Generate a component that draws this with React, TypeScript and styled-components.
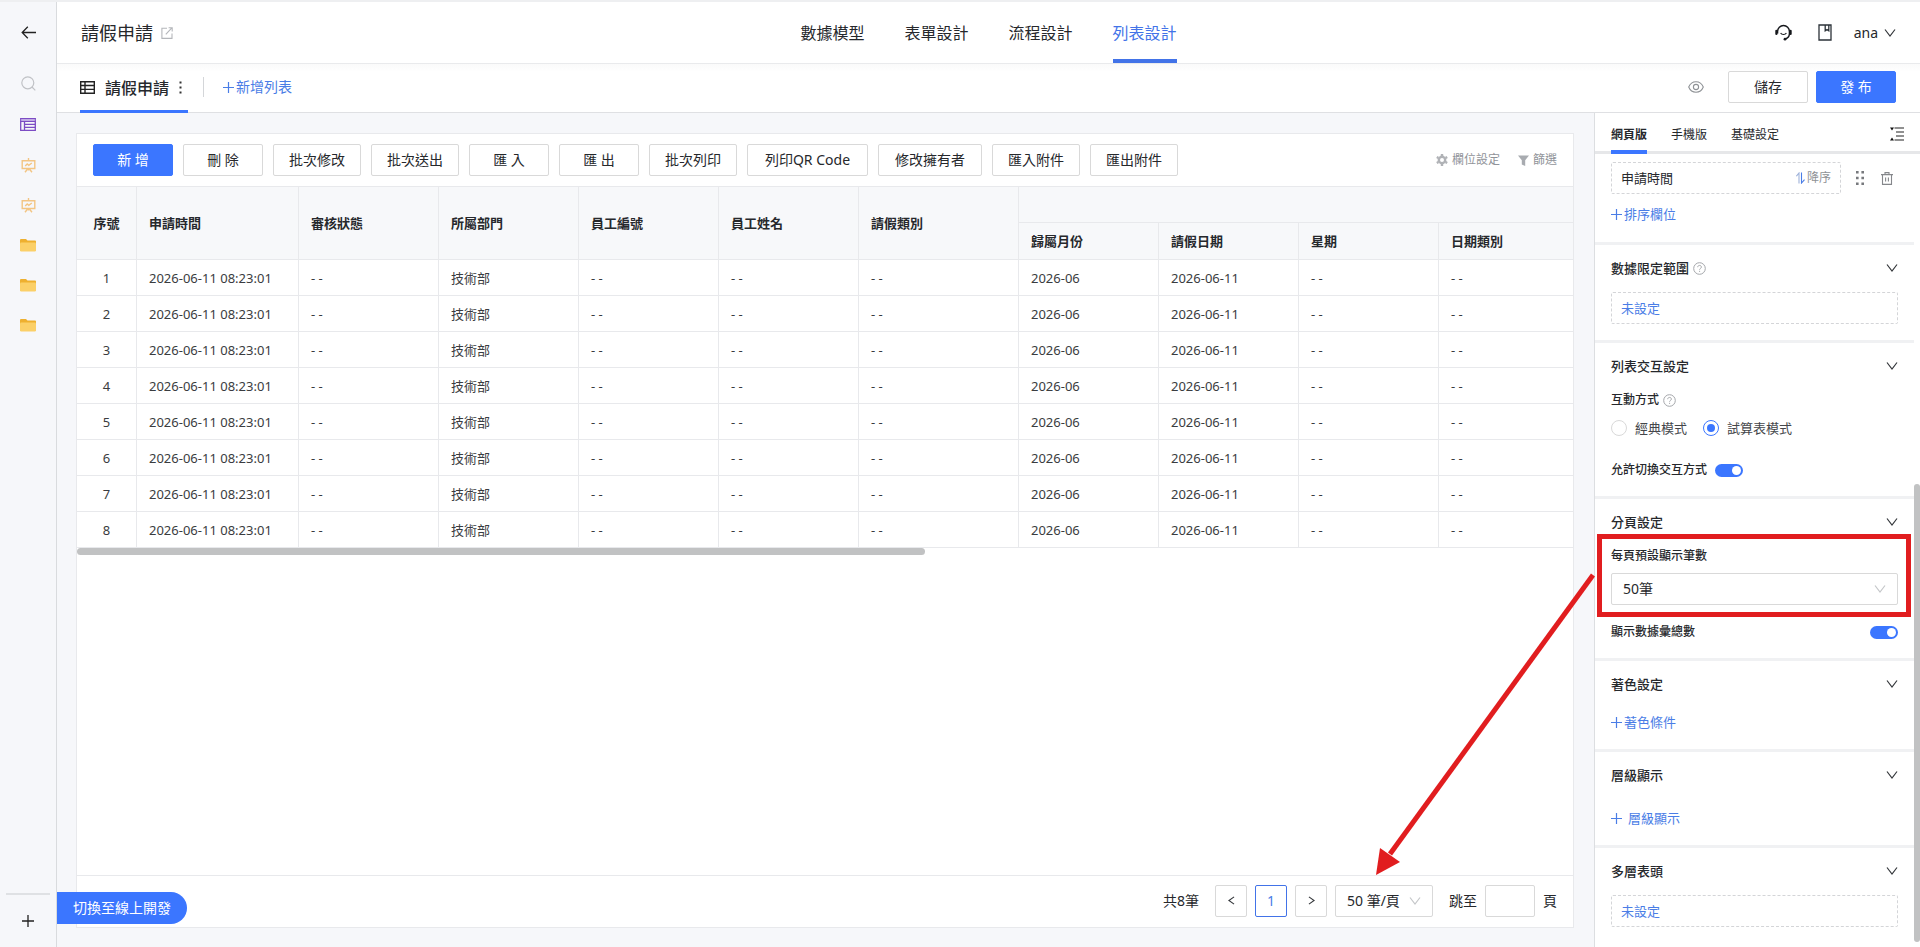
import React, { useState } from "react";
import styled, { createGlobalStyle } from "styled-components";

const BLUE = "#3b76ff";
const LINK = "#4a7de6";
const INK = "#26282c";
const LINE = "#e8e9ec";

const GlobalStyle = createGlobalStyle`
  *, *::before, *::after { box-sizing: border-box; }
  body {
    margin: 0;
    background: #fff;
    color: ${INK};
    font-family: "Noto Sans", "Noto Sans CJK TC", sans-serif;
    font-size: 14px;
    line-height: 20px;
  }
  button, input, select { font: inherit; color: inherit; margin: 0; }
  button { cursor: pointer; }
  svg { display: block; flex: none; }
`;

/* ---------- shell ---------- */

const Shell = styled.div`
  position: relative;
  display: flex;
  min-height: 100vh;
  border-top: 2px solid #eeeff1;
  background: #f6f7fa;
`;

const Sidebar = styled.nav`
  display: flex;
  flex-direction: column;
  align-items: center;
  width: 57px;
  flex: none;
  border-right: 1px solid #d9dbde;
`;

const SideButton = styled.button<{ $height?: number }>`
  display: flex;
  align-items: center;
  justify-content: center;
  width: 100%;
  height: ${(p) => p.$height ?? 40}px;
  padding: 0;
  border: 0;
  background: none;
`;

const SideFoot = styled.div`
  width: 44px;
  margin-top: auto;
  border-top: 2px solid #dfe1e4;
`;

const Main = styled.div`
  display: flex;
  flex-direction: column;
  flex: 1;
  min-width: 0;
`;

/* ---------- top bar ---------- */

const TopBar = styled.header`
  display: grid;
  grid-template-columns: 1fr auto 1fr;
  height: 62px;
  padding: 0 24px;
  background: #fff;
  border-bottom: 1px solid #e9eaec;
`;

const Title = styled.h1`
  display: flex;
  align-items: center;
  gap: 8px;
  margin: 0;
  font-size: 18px;
  font-weight: 400;
`;

const IconButton = styled.button`
  display: flex;
  align-items: center;
  padding: 0;
  border: 0;
  background: none;
`;

const TopTabs = styled.nav`
  display: flex;
  gap: 40px;
`;

const TopTab = styled.a<{ $active?: boolean }>`
  display: flex;
  align-items: center;
  padding-top: 4px;
  border-bottom: 4px solid ${(p) => (p.$active ? "#4273e8" : "transparent")};
  color: ${(p) => (p.$active ? "#4273e8" : INK)};
  font-size: 16px;
  text-decoration: none;
`;

const TopTools = styled.div`
  display: flex;
  align-items: center;
  justify-content: flex-end;
  gap: 26px;
`;

const UserButton = styled(IconButton)`
  gap: 6px;
  margin-left: -4px;
`;

/* ---------- list bar ---------- */

const ListBar = styled.div`
  display: flex;
  align-items: center;
  height: 49px;
  padding: 0 24px 2px 23px;
  background: linear-gradient(#fafafa, #fff 8px);
  border-bottom: 1px solid #dfe0e3;
`;

const ListTab = styled.div`
  display: flex;
  align-items: center;
  align-self: stretch;
  width: 108px;
  padding-top: 1px;
  margin-bottom: -3px;
  border-bottom: 3px solid ${BLUE};
  font-size: 16px;
  font-weight: 500;
  gap: 10px;
  white-space: nowrap;
`;

const Divider = styled.span`
  width: 1px;
  height: 20px;
  margin: 0 19px 0 15px;
  background: #d4d6d9;
`;

const LinkButton = styled.button<{ $size?: number; $gap?: number }>`
  display: flex;
  align-items: center;
  gap: ${(p) => p.$gap ?? 2}px;
  height: 22px;
  padding: 0;
  border: 0;
  background: none;
  color: ${LINK};
  font-size: ${(p) => p.$size ?? 13}px;
`;

const BarActions = styled.div`
  display: flex;
  align-items: center;
  gap: 8px;
  margin-left: auto;
`;

const EyeButton = styled(IconButton)`
  margin-right: 16px;
`;

const Button = styled.button<{ $primary?: boolean; $min?: number }>`
  height: 32px;
  min-width: ${(p) => p.$min ?? 80}px;
  padding: 0 15px;
  border: 1px solid ${(p) => (p.$primary ? BLUE : "#d9d9d9")};
  border-radius: 2px;
  background: ${(p) => (p.$primary ? BLUE : "#fff")};
  color: ${(p) => (p.$primary ? "#fff" : INK)};
  white-space: nowrap;
`;

/* ---------- work area ---------- */

const Work = styled.div`
  display: flex;
  flex: 1;
`;

const Canvas = styled.main`
  display: flex;
  flex: 1;
  min-width: 0;
  padding: 20px 20px 19px 19px;
`;

const Card = styled.section`
  display: flex;
  flex-direction: column;
  flex: 1;
  min-width: 0;
  border: 1px solid ${LINE};
  background: #fff;
`;

const Toolbar = styled.div`
  display: flex;
  align-items: center;
  gap: 10px;
  height: 52px;
  padding: 0 16px;
`;

const ToolLinks = styled.div`
  display: flex;
  gap: 18px;
  margin-left: auto;
`;

const ToolLink = styled.button`
  display: flex;
  align-items: center;
  gap: 4px;
  padding: 0;
  border: 0;
  background: none;
  color: #909399;
  font-size: 12px;
`;

const TableWrap = styled.div`
  overflow: hidden;
`;

const Table = styled.table`
  table-layout: fixed;
  width: max(100%, 1502px);
  border-collapse: separate;
  border-spacing: 0;
  font-size: 13px;
`;

const Th = styled.th<{ $center?: boolean }>`
  height: 37px;
  padding: 0 12px;
  border-right: 1px solid ${LINE};
  border-bottom: 1px solid ${LINE};
  background: #f7f8fa;
  font-weight: 600;
  text-align: ${(p) => (p.$center ? "center" : "left")};
`;

const HeadRow = styled.tr`
  &:first-child th { border-top: 1px solid ${LINE}; }
`;

const Td = styled.td<{ $center?: boolean }>`
  height: 36px;
  padding: 0 12px;
  border-right: 1px solid ${LINE};
  border-bottom: 1px solid ${LINE};
  color: #3a3c40;
  text-align: ${(p) => (p.$center ? "center" : "left")};
  white-space: nowrap;
`;

const HorizontalThumb = styled.div`
  width: 56.7%;
  height: 7px;
  border-radius: 4px;
  background: #c1c2c3;
`;

const Pager = styled.footer`
  display: flex;
  align-items: center;
  justify-content: flex-end;
  gap: 8px;
  height: 52px;
  margin-top: auto;
  padding: 0 16px 2px;
  border-top: 1px solid ${LINE};
`;

const PagerText = styled.span`
  margin-right: 8px;
`;

const PageButton = styled.button<{ $current?: boolean }>`
  display: flex;
  align-items: center;
  justify-content: center;
  width: 32px;
  height: 32px;
  padding: 0;
  border: 1px solid ${(p) => (p.$current ? "#4273e8" : "#d9d9d9")};
  border-radius: 2px;
  background: #fff;
  color: ${(p) => (p.$current ? LINK : INK)};
`;

const JumpLabel = styled.label`
  display: flex;
  align-items: center;
  gap: 8px;
  margin-left: 8px;
`;

const JumpInput = styled.input`
  width: 50px;
  height: 32px;
  border: 1px solid #d9d9d9;
  border-radius: 2px;
`;

const SelectBox = styled.div<{ $width: string; $top?: number }>`
  position: relative;
  width: ${(p) => p.$width};
  margin-top: ${(p) => p.$top ?? 0}px;

  svg {
    position: absolute;
    top: 10px;
    right: 12px;
    pointer-events: none;
  }
`;

const Select = styled.select`
  display: block;
  appearance: none;
  width: 100%;
  height: 32px;
  padding: 0 24px 0 11px;
  border: 1px solid #d9d9d9;
  border-radius: 2px;
  background: #fff;
`;

/* ---------- settings panel ---------- */

const Panel = styled.aside`
  display: flex;
  flex-direction: column;
  width: 326px;
  flex: none;
  border-left: 1px solid #dcdee1;
  background: #fff;
`;

const PanelTabs = styled.div`
  display: flex;
  gap: 24px;
  height: 41px;
  padding: 0 16px;
  border-bottom: 3px solid #e6e7e9;
  font-size: 12px;
`;

const PanelTab = styled.button<{ $active?: boolean }>`
  margin-bottom: -3px;
  padding: 6px 0 0;
  border: 0;
  border-bottom: 4px solid ${(p) => (p.$active ? BLUE : "transparent")};
  background: none;
  font-size: 12px;
  font-weight: ${(p) => (p.$active ? 700 : 400)};
`;

const PanelMenu = styled(IconButton)`
  margin-left: auto;
  padding-top: 4px;
`;

const PanelBody = styled.div`
  display: flex;
  flex: 1;
`;

const Sections = styled.div`
  flex: 1;
  min-width: 0;
`;

const ScrollTrack = styled.div`
  width: 6px;
  padding-top: 330px;
`;

const ScrollThumb = styled.div`
  height: 458px;
  border-radius: 3px;
  background: #c1c2c3;
`;

const Section = styled.section<{ $first?: boolean }>`
  padding: ${(p) => (p.$first ? "8px 16px 17px" : "13px 16px 16px")};
  border-bottom: 3px solid #f0f1f3;

  &:last-child { border-bottom: 0; }
`;

const SectionHead = styled.div<{ $after?: number }>`
  display: flex;
  align-items: center;
  height: 20px;
  margin-bottom: ${(p) => p.$after ?? 14}px;
`;

const SectionTitle = styled.h2`
  display: flex;
  align-items: center;
  gap: 4px;
  margin: 0;
  font-size: 13px;
  font-weight: 500;
`;

const Collapse = styled(IconButton)`
  margin-left: auto;
`;

const FieldLabel = styled.label`
  font-size: 12px;
  font-weight: 500;
`;

const FieldRow = styled.div<{ $gap?: number; $top?: number; $spread?: boolean }>`
  display: flex;
  align-items: center;
  justify-content: ${(p) => (p.$spread ? "space-between" : "flex-start")};
  gap: ${(p) => p.$gap ?? 8}px;
  height: 20px;
  margin-top: ${(p) => p.$top ?? 0}px;
`;

const DashedBox = styled.button`
  display: flex;
  align-items: center;
  width: 100%;
  height: 32px;
  padding: 0 9px;
  border: 1px dashed #d4d5d8;
  border-radius: 2px;
  background: #fff;
  color: ${LINK};
  font-size: 13px;
`;

const SortRow = styled.div`
  display: flex;
  align-items: center;
  gap: 15px;
  padding-right: 5px;
  margin-bottom: 9px;
`;

const SortBox = styled(DashedBox)`
  flex: 1;
  color: ${INK};
`;

const SortOrder = styled.span`
  display: flex;
  align-items: center;
  gap: 2px;
  margin-left: auto;
  color: #8f9296;
  font-size: 12px;
`;

const TrashButton = styled(IconButton)`
  margin-left: 2px;
`;

const RadioLabel = styled.label`
  display: flex;
  align-items: center;
  gap: 8px;
  font-size: 13px;
  color: #44464a;
`;

const Radio = styled.input`
  appearance: none;
  display: grid;
  place-items: center;
  width: 16px;
  height: 16px;
  border: 1px solid #d9d9d9;
  border-radius: 50%;
  background: #fff;

  &:checked { border-color: ${BLUE}; }
  &:checked::before {
    content: "";
    width: 8px;
    height: 8px;
    border-radius: 50%;
    background: ${BLUE};
  }
`;

const Switch = styled.input`
  appearance: none;
  display: flex;
  align-items: center;
  width: 28px;
  height: 13px;
  padding: 0 2px;
  border-radius: 7px;
  background: #bfc1c5;

  &::before {
    content: "";
    width: 9px;
    height: 9px;
    border-radius: 50%;
    background: #fff;
  }
  &:checked { justify-content: flex-end; background: ${BLUE}; }
`;

const Highlight = styled.div`
  position: relative;

  &::after {
    content: "";
    position: absolute;
    inset: -12px -13px -12px -14px;
    border: 5px solid #e11d1f;
    pointer-events: none;
  }
`;

const Arrow = styled.svg`
  position: absolute;
  right: 320px;
  bottom: 67px;
  pointer-events: none;
`;

const ModePill = styled.button`
  position: absolute;
  left: 57px;
  bottom: 23px;
  height: 32px;
  padding: 0 16px;
  border: 0;
  border-radius: 0 16px 16px 0;
  background: ${BLUE};
  color: #fff;
`;

/* ---------- icons ---------- */

const Chevron = ({ color = "#33363a", dir = "down", size = 12 }: { color?: string; dir?: "down" | "left" | "right"; size?: number }) => (
  <svg width={size} height={size} viewBox="0 0 12 12" fill="none" stroke={color} strokeWidth="1.2">
    <path d={dir === "down" ? "M1 2.5 6 9l5-6.5" : dir === "left" ? "M8.8 2 3.2 6l5.6 4" : "M3.2 2l5.6 4-5.6 4"} />
  </svg>
);

const Plus = ({ color = LINK, size = 11 }: { color?: string; size?: number }) => (
  <svg width={size} height={size} viewBox="0 0 11 11" stroke={color} strokeWidth="1.2">
    <path d="M5.5 0v11M0 5.5h11" />
  </svg>
);

const Help = () => (
  <svg width="13" height="13" viewBox="0 0 13 13" fill="none" stroke="#a4a6aa">
    <circle cx="6.5" cy="6.5" r="5.8" />
    <path d="M4.7 5.2c0-2.4 3.7-2.3 3.7-.1 0 1.3-1.8 1.3-1.8 2.6M6.6 8.8v1.1" />
  </svg>
);

const Board = () => (
  <svg width="15" height="15" viewBox="0 0 15 15" fill="none" stroke="#f3c583" strokeWidth="1.4">
    <path d="M1.2 2.7h12.6v7.8H1.2zM7.5 0v2.7M7.5 10.5v2M4 14.3l2.4-3M11 14.3l-2.4-3M4.2 8l2-2 1.6 1.4L10.8 5" />
  </svg>
);

const Folder = () => (
  <svg width="16" height="14" viewBox="0 0 16 14">
    <path d="M0 2a1 1 0 0 1 1-1h5l1.5 1.5H15a1 1 0 0 1 1 1V8H0z" fill="#eeb02f" />
    <rect y="4.5" width="16" height="9" rx="1.2" fill="#fbd068" />
  </svg>
);

const BackArrow = () => (
  <svg width="15" height="13" viewBox="0 0 15 13" fill="none" stroke="#222" strokeWidth="1.3">
    <path d="M15 6.5H1.2M6.8.8 1.2 6.5l5.6 5.7" />
  </svg>
);

const SearchIcon = () => (
  <svg width="15" height="15" viewBox="0 0 15 15" fill="none" stroke="#c0c2c6" strokeWidth="1.2">
    <circle cx="6.8" cy="6.8" r="6" />
    <path d="m11 11 3.3 3.3" />
  </svg>
);

const PurpleTable = () => (
  <svg width="16" height="13" viewBox="0 0 16 13" fill="none" stroke="#7c4cc4" strokeWidth="1.3">
    <path d="M.7.7h14.6v11.6H.7zM4.5 3v9.3" />
    <path d="M.7 3.4h14.6M4.5 6.4h10.8M4.5 9.4h10.8" />
    <path d="M.7 2h14.6" stroke="#b79be2" />
  </svg>
);

const ShareIcon = () => (
  <svg width="12" height="12" viewBox="0 0 12 12" fill="none" stroke="#b4b6ba" strokeWidth="1.1">
    <path d="M6 1.2H.9v10.2H11V6.5M4.8 7.4 10.6 1.2M7.6.8h3.6v3.6" />
  </svg>
);

const Headset = () => (
  <svg width="17" height="17" viewBox="0 0 17 17" fill="none" stroke="#16181c" strokeWidth="1.4">
    <path d="M2.6 9.5V7.4a5.9 5.9 0 0 1 11.8 0v2.2c0 2.8-1.6 4.8-4.2 5.4" />
    <path d="M1.4 6.8V10M15.6 6.8V10" strokeWidth="2.2" strokeLinecap="round" />
    <path d="M5.6 9c1.2 2 4.5 2 5.8 0" strokeWidth="1.2" />
    <circle cx="10" cy="15.2" r="1.4" fill="#16181c" stroke="none" />
  </svg>
);

const Book = () => (
  <svg width="14" height="17" viewBox="0 0 14 17" fill="none" stroke="#2b3238" strokeWidth="1.3">
    <path d="M1 1h12v15H1zM7.2 1v5.8L9 5.6l1.8 1.2V1" />
  </svg>
);

const GridIcon = () => (
  <svg width="15" height="13" viewBox="0 0 15 13" fill="none" stroke="#222" strokeWidth="1.4">
    <path d="M.7.7h13.6v11.6H.7zM5 .7v11.6M.7 4.5h13.6M.7 8.4h13.6" />
  </svg>
);

const Dots = () => (
  <svg width="3" height="13" viewBox="0 0 3 13" fill="#333">
    <path d="M.5.5h2v2h-2zM.5 5.5h2v2h-2zM.5 10.5h2v2h-2z" />
  </svg>
);

const Eye = () => (
  <svg width="16" height="12" viewBox="0 0 16 12" fill="none" stroke="#8f9296" strokeWidth="1.1">
    <path d="M.7 6C3.6-1 12.4-1 15.3 6c-2.9 7-11.7 7-14.6 0z" />
    <circle cx="8" cy="6" r="2.6" />
  </svg>
);

const Gear = () => (
  <svg width="12" height="12" viewBox="0 0 12 12" fill="none" stroke="#b0b2b6">
    <circle cx="6" cy="6" r="3.2" strokeWidth="2.4" />
    <path d="M6 0v2M6 10v2M.8 3l1.7 1M9.500 8l1.700 1M.8 9l1.700-1M9.500 4l1.700-1" strokeWidth="2.400" />
  </svg>
);

const Funnel = () => (
  <svg width="11" height="11" viewBox="0 0 11 11" fill="#a8abb0">
    <path d="M0 .5h11L7.200 5.200v5.800L3.800 9.600V5.200z" />
  </svg>
);

const Indent = () => (
  <svg width="14" height="14" viewBox="0 0 14 14" stroke="#222" strokeWidth="1.2">
    <path d="M4.5 1H14M6 5h8M6 9h8M4.5 13H14" />
    <path d="M0 .5h4L2 3.6zM0 13.5h4L2 10.4z" fill="#111" stroke="none" />
  </svg>
);

const SortArrows = () => (
  <svg width="9" height="12" viewBox="0 0 9 12" fill="none" strokeWidth="1.1">
    <path d="M.4 4.2 3 1v10.4" stroke="#9fb2da" />
    <path d="M5.5.6V11l3-3.4" stroke={LINK} />
  </svg>
);

const Grip = () => (
  <svg width="8" height="14" viewBox="0 0 8 14" fill="#77797d">
    <path d="M0 0h2.6v2.6H0zM5.4 0H8v2.6H5.4zM0 5.7h2.6v2.6H0zM5.4 5.7H8v2.6H5.4zM0 11.4h2.6V14H0zM5.4 11.4H8V14H5.4z" />
  </svg>
);

const Trash = () => (
  <svg width="12" height="13" viewBox="0 0 12 13" fill="none" stroke="#85878b" strokeWidth="1.1">
    <path d="M0 2.6h12M1.5 2.6v9.8h9V2.6M4 2.6V.6h4v2M4.6 5.5v4M7.4 5.5v4" />
  </svg>
);

/* ---------- data ---------- */

const topTabs = ["數據模型", "表單設計", "流程設計", "列表設計"];
const tools: { text: string; min?: number }[] = [
  { text: "新 增" },
  { text: "刪 除" },
  { text: "批次修改" },
  { text: "批次送出" },
  { text: "匯 入" },
  { text: "匯 出" },
  { text: "批次列印" },
  { text: "列印QR Code", min: 121 },
  { text: "修改擁有者", min: 104 },
  { text: "匯入附件" },
  { text: "匯出附件" },
];
const columns = ["申請時間", "審核狀態", "所屬部門", "員工編號", "員工姓名", "請假類別"];
const groupColumns = ["歸屬月份", "請假日期", "星期", "日期類別"];
const widths = [60, 162, 140, 140, 140, 140, 160, 140, 140, 140, 140];
const row = ["2026-06-11 08:23:01", "- -", "技術部", "- -", "- -", "- -", "2026-06", "2026-06-11", "- -", "- -"];

const Heading = ({ text, help, after }: { text: string; help?: boolean; after?: number }) => (
  <SectionHead $after={after}>
    <SectionTitle>
      {text}
      {help && <Help />}
    </SectionTitle>
    <Collapse aria-label={text}>
      <Chevron />
    </Collapse>
  </SectionHead>
);

export default function App() {
  const [mode, setMode] = useState("sheet");

  return (
    <>
      <GlobalStyle />
      <Shell>
        <Sidebar>
          <SideButton $height={61} aria-label="返回"><BackArrow /></SideButton>
          <SideButton aria-label="搜尋"><SearchIcon /></SideButton>
          <SideButton aria-label="列表" $height={42}><PurpleTable /></SideButton>
          <SideButton aria-label="看板"><Board /></SideButton>
          <SideButton aria-label="看板"><Board /></SideButton>
          <SideButton aria-label="資料夾"><Folder /></SideButton>
          <SideButton aria-label="資料夾"><Folder /></SideButton>
          <SideButton aria-label="資料夾"><Folder /></SideButton>
          <SideFoot>
            <SideButton $height={52} aria-label="新增"><Plus color="#222" size={12} /></SideButton>
          </SideFoot>
        </Sidebar>

        <Main>
          <TopBar>
            <Title>
              請假申請
              <IconButton aria-label="開啟"><ShareIcon /></IconButton>
            </Title>
            <TopTabs>
              {topTabs.map((t, i) => (
                <TopTab key={t} href="#" $active={i === 3}>{t}</TopTab>
              ))}
            </TopTabs>
            <TopTools>
              <IconButton aria-label="客服"><Headset /></IconButton>
              <IconButton aria-label="文件"><Book /></IconButton>
              <UserButton>
                ana
                <Chevron />
              </UserButton>
            </TopTools>
          </TopBar>

          <ListBar>
            <ListTab>
              <GridIcon />
              請假申請
              <IconButton aria-label="更多"><Dots /></IconButton>
            </ListTab>
            <Divider />
            <LinkButton $size={14}><Plus />新增列表</LinkButton>
            <BarActions>
              <EyeButton aria-label="預覽"><Eye /></EyeButton>
              <Button>儲存</Button>
              <Button $primary>發 布</Button>
            </BarActions>
          </ListBar>

          <Work>
            <Canvas>
              <Card>
                <Toolbar>
                  {tools.map((t, i) => (
                    <Button key={t.text} $primary={i === 0} $min={t.min}>{t.text}</Button>
                  ))}
                  <ToolLinks>
                    <ToolLink><Gear />欄位設定</ToolLink>
                    <ToolLink><Funnel />篩選</ToolLink>
                  </ToolLinks>
                </Toolbar>
                <TableWrap>
                  <Table>
                    <colgroup>
                      {widths.map((w, i) => <col key={i} width={w} />)}
                    </colgroup>
                    <thead>
                      <HeadRow>
                        <Th rowSpan={2} $center>序號</Th>
                        {columns.map((c) => <Th key={c} rowSpan={2}>{c}</Th>)}
                        <Th colSpan={4} />
                      </HeadRow>
                      <HeadRow>
                        {groupColumns.map((c) => <Th key={c}>{c}</Th>)}
                      </HeadRow>
                    </thead>
                    <tbody>
                      {[1, 2, 3, 4, 5, 6, 7, 8].map((n) => (
                        <tr key={n}>
                          <Td $center>{n}</Td>
                          {row.map((v, i) => <Td key={i}>{v}</Td>)}
                        </tr>
                      ))}
                    </tbody>
                  </Table>
                </TableWrap>
                <HorizontalThumb />
                <Pager>
                  <PagerText>共8筆</PagerText>
                  <PageButton aria-label="上一頁"><Chevron dir="left" size={11} /></PageButton>
                  <PageButton $current>1</PageButton>
                  <PageButton aria-label="下一頁"><Chevron dir="right" size={11} /></PageButton>
                  <SelectBox $width="98px">
                    <Select aria-label="每頁筆數"><option>50 筆/頁</option></Select>
                    <Chevron color="#c4c6c9" />
                  </SelectBox>
                  <JumpLabel>
                    跳至
                    <JumpInput type="text" />
                    頁
                  </JumpLabel>
                </Pager>
              </Card>
            </Canvas>

            <Panel>
              <PanelTabs>
                <PanelTab $active>網頁版</PanelTab>
                <PanelTab>手機版</PanelTab>
                <PanelTab>基礎設定</PanelTab>
                <PanelMenu aria-label="收合"><Indent /></PanelMenu>
              </PanelTabs>
              <PanelBody>
                <Sections>
                  <Section $first>
                    <SortRow>
                      <SortBox>
                        申請時間
                        <SortOrder><SortArrows />降序</SortOrder>
                      </SortBox>
                      <Grip />
                      <TrashButton aria-label="刪除"><Trash /></TrashButton>
                    </SortRow>
                    <LinkButton><Plus />排序欄位</LinkButton>
                  </Section>

                  <Section>
                    <Heading text="數據限定範圍" help />
                    <DashedBox>未設定</DashedBox>
                  </Section>

                  <Section>
                    <Heading text="列表交互設定" />
                    <FieldRow $gap={4}>
                      <FieldLabel as="span">互動方式</FieldLabel>
                      <Help />
                    </FieldRow>
                    <FieldRow $gap={16} $top={8}>
                      <RadioLabel>
                        <Radio type="radio" name="mode" checked={mode === "classic"} onChange={() => setMode("classic")} />
                        經典模式
                      </RadioLabel>
                      <RadioLabel>
                        <Radio type="radio" name="mode" checked={mode === "sheet"} onChange={() => setMode("sheet")} />
                        試算表模式
                      </RadioLabel>
                    </FieldRow>
                    <FieldRow $top={22}>
                      <FieldLabel htmlFor="allow-switch">允許切換交互方式</FieldLabel>
                      <Switch id="allow-switch" type="checkbox" role="switch" defaultChecked />
                    </FieldRow>
                  </Section>

                  <Section>
                    <Heading text="分頁設定" />
                    <Highlight>
                      <FieldRow>
                        <FieldLabel htmlFor="page-size">每頁預設顯示筆數</FieldLabel>
                      </FieldRow>
                      <SelectBox $width="100%" $top={7}>
                        <Select id="page-size"><option>50筆</option></Select>
                        <Chevron color="#c4c6c9" />
                      </SelectBox>
                    </Highlight>
                    <FieldRow $top={17} $spread>
                      <FieldLabel htmlFor="show-total">顯示數據彙總數</FieldLabel>
                      <Switch id="show-total" type="checkbox" role="switch" defaultChecked />
                    </FieldRow>
                  </Section>

                  <Section>
                    <Heading text="著色設定" after={17} />
                    <LinkButton><Plus />著色條件</LinkButton>
                  </Section>

                  <Section>
                    <Heading text="層級顯示" after={22} />
                    <LinkButton $gap={6}><Plus />層級顯示</LinkButton>
                  </Section>

                  <Section>
                    <Heading text="多層表頭" />
                    <DashedBox>未設定</DashedBox>
                  </Section>
                </Sections>
                <ScrollTrack><ScrollThumb /></ScrollTrack>
              </PanelBody>
            </Panel>
          </Work>
        </Main>

        <Arrow width="230" height="310" viewBox="0 0 230 310">
          <path d="M223 5 20 284" stroke="#e11d1f" strokeWidth="5" />
          <path d="M6 305 10 278 30 292z" fill="#e11d1f" />
        </Arrow>
        <ModePill>切換至線上開發</ModePill>
      </Shell>
    </>
  );
}
